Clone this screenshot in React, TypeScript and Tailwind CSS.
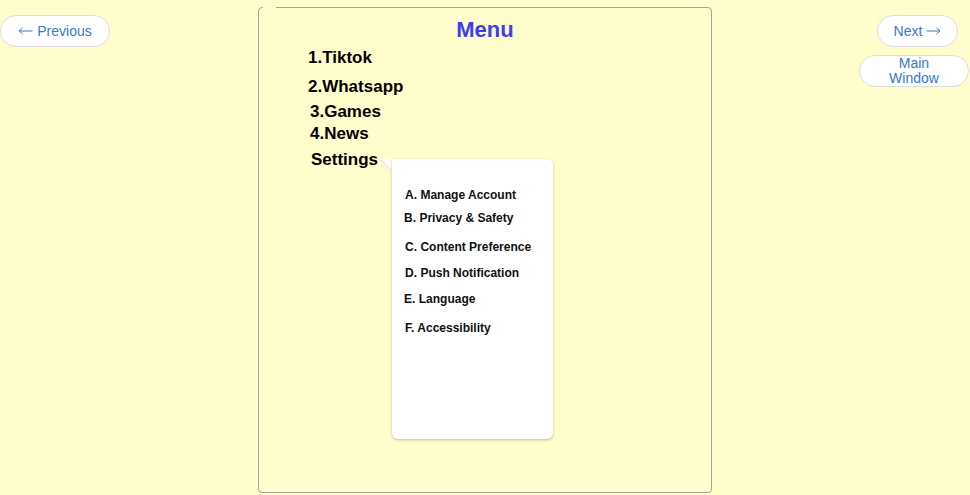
import React from 'react';

const menuItems = [
  { label: '1.Tiktok', cls: 'mt-[5px] ml-[49px]' },
  { label: '2.Whatsapp', cls: 'mt-[9px] ml-[49px]' },
  { label: '3.Games', cls: 'mt-[5px] ml-[51px]' },
  { label: '4.News', cls: 'mt-[2px] ml-[51px]' },
];

const settingsItems = [
  { label: 'A. Manage Account', cls: 'mt-[28px] ml-[13px]' },
  { label: 'B. Privacy & Safety', cls: 'mt-[7px] ml-[12px]' },
  { label: 'C. Content Preference', cls: 'mt-[13px] ml-[13px]' },
  { label: 'D. Push Notification', cls: 'mt-[10px] ml-[13px]' },
  { label: 'E. Language', cls: 'mt-[10px] ml-[12px]' },
  { label: 'F. Accessibility', cls: 'mt-[13px] ml-[13px]' },
];

const Arrow: React.FC<{ dir: 'left' | 'right' }> = ({ dir }) => (
  <svg width="15" height="8" viewBox="0 0 15 8" className={dir === 'right' ? 'rotate-180' : ''}>
    <path d="M1 4 H14.5 M1 4 L4.5 1 M1 4 L4.5 7" stroke="currentColor" strokeWidth="1" fill="none" />
  </svg>
);

const App: React.FC = () => {
  return (
    <div className="flex items-start w-full h-[495px] bg-[#fffdcb] font-['Liberation_Sans',Arial,sans-serif] overflow-hidden">
      {/* Left nav */}
      <button className="mt-[15px] w-[110px] h-[32px] rounded-full bg-white border border-[#dcdcdc] text-[14px] text-[#3a78c9] shrink-0 flex items-center justify-center gap-[4px]">
        <Arrow dir="left" />
        <span>Previous</span>
      </button>

      {/* Menu panel */}
      <div className="relative ml-[148px] mt-[7px] w-[454px] h-[486px] border border-[#a3a3a3] rounded-[4px] shrink-0">
        <div className="absolute top-[-1px] left-[4px] w-[13px] h-[1px] bg-[#fffdcb]" />
        <h1 className="pt-[9px] text-center text-[22px] leading-[26px] font-bold text-[#3d3df2]">Menu</h1>

        {menuItems.map((item) => (
          <div key={item.label} className={`${item.cls} text-[17px] leading-[20px] font-bold text-black`}>
            {item.label}
          </div>
        ))}

        <div className="flex items-start mt-[6px] ml-[52px]">
          <span className="text-[17px] leading-[20px] font-bold text-black">Settings</span>
          <div className="flex items-start mt-[9px] ml-[2px]">
            <svg width="12" height="13" viewBox="0 0 12 13" className="shrink-0">
              <polygon points="0,0 12,0 12,12.5" fill="#ffffff" />
              <line x1="0.5" y1="0.3" x2="12" y2="12.5" stroke="#e4e1c4" strokeWidth="1" />
            </svg>
            <div className="w-[161px] h-[280px] bg-white rounded-[6px] rounded-tl-none shadow-[0_1px_3px_rgba(0,0,0,0.25)] flex flex-col">
              {settingsItems.map((item) => (
                <div key={item.label} className={`${item.cls} text-[12px] leading-[16px] font-bold text-[#111]`}>
                  {item.label}
                </div>
              ))}
            </div>
          </div>
        </div>
      </div>

      {/* Right nav */}
      <div className="ml-auto mr-[1px] flex flex-col items-end shrink-0">
        <button className="mt-[15px] mr-[11px] w-[81px] h-[32px] rounded-full bg-white border border-[#dcdcdc] text-[14px] text-[#3a78c9] flex items-center justify-center gap-[4px]">
          <span>Next</span>
          <Arrow dir="right" />
        </button>
        <button className="mt-[8px] w-[110px] h-[32px] rounded-full bg-white border border-[#dcdcdc] text-[14px] leading-[15px] text-[#3a78c9]">
          Main
          <br />
          Window
        </button>
      </div>
    </div>
  );
};

export default App;
